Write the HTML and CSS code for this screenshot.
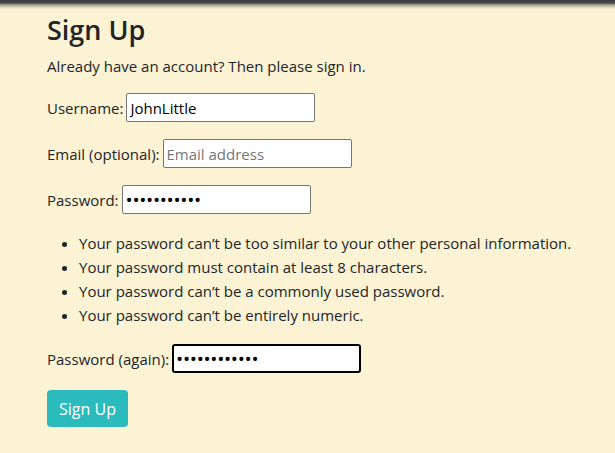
FILE: index.html
```html
<!DOCTYPE html>
<html lang="en">
<head>
<meta charset="utf-8">
<title>Sign Up</title>
<link rel="stylesheet" href="styles.css">
</head>
<body>
<div class="topbar"></div>
<main class="container">
  <h1 class="title">Sign Up</h1>
  <p class="lead">Already have an account? Then please sign in.</p>
  <form class="form">
    <div class="row"><label for="u">Username:</label><input id="u" class="field" type="text" value="JohnLittle"></div>
    <div class="row"><label for="e">Email (optional):</label><input id="e" class="field" type="email" placeholder="Email address"></div>
    <div class="row"><label for="p1">Password:</label><input id="p1" class="field pw" type="password" value="abcdefghijk"></div>
    <ul class="rules">
      <li>Your password can’t be too similar to your other personal information.</li>
      <li>Your password must contain at least 8 characters.</li>
      <li>Your password can’t be a commonly used password.</li>
      <li>Your password can’t be entirely numeric.</li>
    </ul>
    <div class="row"><label for="p2">Password (again):</label><input id="p2" class="field pw focus" type="password" value="abcdefghijkl"></div>
    <div class="actions"><button class="btn" type="button">Sign Up</button></div>
  </form>
</main>
</body>
</html>
```
FILE: styles.css
```css
html, body {
  margin: 0;
  padding: 0;
}
body {
  background: #fcf3d4;
  color: #212529;
  font-family: "Open Sans", "Noto Sans", sans-serif;
  font-size: 15px;
  line-height: 24px;
  height: 453px;
  overflow: hidden;
}
.topbar {
  height: 9px;
  background: linear-gradient(#3b3b3b 0, #4a4a48 3px, #a9a596 5px, #fcf3d4 9px);
}
.container {
  padding-left: 47px;
}
.title {
  margin: 5px 0 0;
  font-size: 27px;
  font-weight: 600;
  line-height: 32px;
}
.lead {
  margin: 8px 0 0;
}
.form {
  margin-top: 15px;
  display: flex;
  flex-direction: column;
  gap: 17px;
}
.row {
  display: flex;
  align-items: center;
  height: 29px;
}
.row label {
  margin-right: 3px;
}
.field {
  box-sizing: border-box;
  width: 189px;
  height: 29px;
  border: 1px solid #767676;
  border-radius: 2px;
  background: #fff;
  padding: 0 3px;
  font-family: inherit;
  font-size: 15px;
  color: #000;
  outline: none;
}
.field.pw {
  font-size: 19px;
  letter-spacing: -0.3px;
}
.field::placeholder {
  color: #757575;
}
.field.focus {
  border: 2px solid #000;
  border-radius: 3px;
  padding: 0 2px;
}
.rules {
  margin: 0;
  padding-left: 32px;
}
.rules li {
  line-height: 24px;
}
.actions {
  display: flex;
}
.btn {
  background: #2bbbbd;
  color: #fff;
  border: none;
  border-radius: 4px;
  width: 81px;
  height: 37px;
  font-family: inherit;
  font-size: 16px;
  padding: 0;
}
```
